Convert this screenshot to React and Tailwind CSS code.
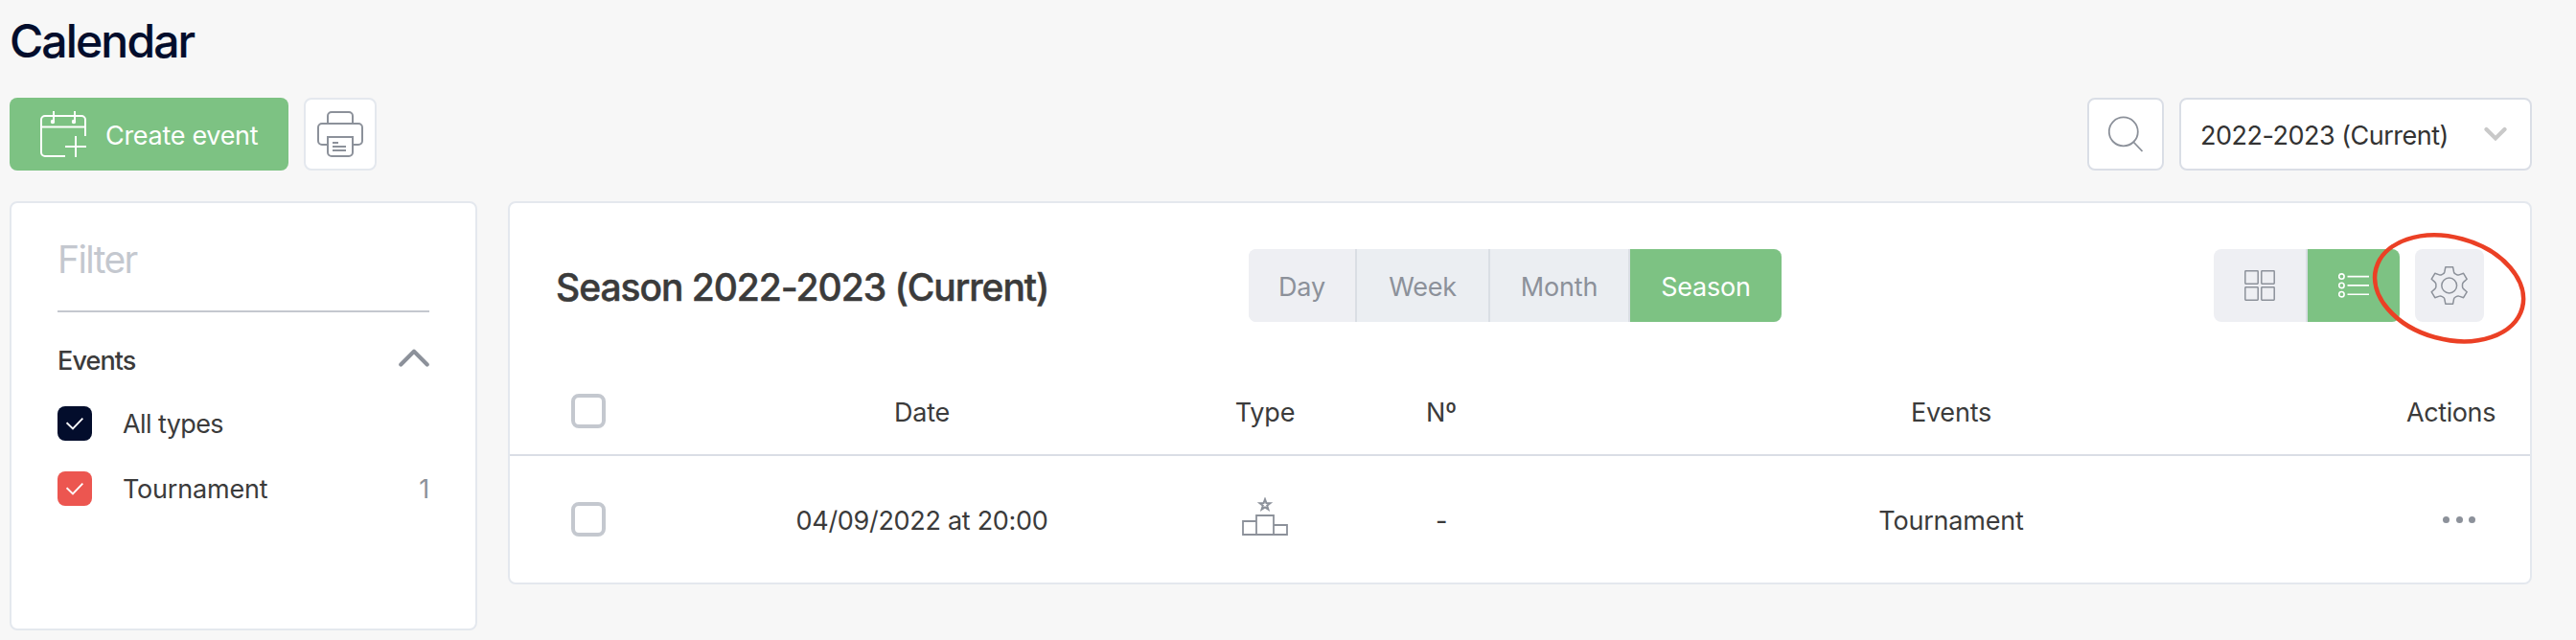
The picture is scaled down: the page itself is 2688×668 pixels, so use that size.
import React from "react";

function CalendarPlusIcon() {
  return (
    <svg width="48" height="48" viewBox="0 0 48 48" fill="none" stroke="white" strokeWidth="2">
      <path d="M47 26V9a4 4 0 0 0-4-4H5a4 4 0 0 0-4 4v34a4 4 0 0 0 4 4h21" />
      <path d="M1 16.5h46M14 0v11M36 0v11" />
      <path d="M37 26v22M26 37h22" />
      <circle cx="13" cy="11" r="1.2" fill="white" />
      <circle cx="35" cy="11" r="1.2" fill="white" />
    </svg>
  );
}

function PrinterIcon() {
  return (
    <svg width="48" height="48" viewBox="0 0 48 48" fill="none" stroke="#8c919a" strokeWidth="2">
      <path d="M11 13V5a4 4 0 0 1 4-4h18a4 4 0 0 1 4 4v8" />
      <path d="M11 35H5a4 4 0 0 1-4-4V17a4 4 0 0 1 4-4h38a4 4 0 0 1 4 4v14a4 4 0 0 1-4 4h-6" />
      <path d="M11 27h26v16a4 4 0 0 1-4 4H15a4 4 0 0 1-4-4z" />
      <path d="M16 33h6M16 37h14M16 41h14" />
    </svg>
  );
}

function SearchIcon() {
  return (
    <svg width="36" height="38" viewBox="0 0 36 38" fill="none" stroke="#8c919a" strokeWidth="1.8">
      <circle cx="15.8" cy="16.4" r="15" />
      <path d="M26.5 27.5 35.5 37" />
    </svg>
  );
}

function GridIcon() {
  return (
    <svg width="32" height="32" viewBox="0 0 32 32" fill="none" stroke="#8c919a" strokeWidth="1.5">
      <rect x="0.8" y="0.8" width="13.4" height="13.4" rx="0.6" />
      <rect x="17.8" y="0.8" width="13.4" height="13.4" rx="0.6" />
      <rect x="0.8" y="17.8" width="13.4" height="13.4" rx="0.6" />
      <rect x="17.8" y="17.8" width="13.4" height="13.4" rx="0.6" />
    </svg>
  );
}

function ListIcon() {
  return (
    <svg width="32" height="26" viewBox="0 0 32 26" fill="none" stroke="white" strokeWidth="1.6">
      <circle cx="3.4" cy="3.6" r="2.7" />
      <circle cx="3.4" cy="12.9" r="2.7" />
      <circle cx="3.4" cy="22.2" r="2.7" />
      <path d="M9.5 3.6H32M9.5 12.9H32M9.5 22.2H32" />
    </svg>
  );
}

function GearIcon() {
  return (
    <svg width="40" height="40" viewBox="0 0 40 40" fill="none" stroke="#8c919a" strokeWidth="1.5" strokeLinejoin="round">
      <circle cx="19.7" cy="20" r="7.9" />
      <path d="M15.8 .8h7.8l1 5.2q.3 1.3 1.5 1.9l1.3.7q1.3.8 2.6.3l4.6-1.6 3.6 6-3.5 3.1q-1.2 1.1-1.2 2.4v2.4q0 1.3 1.2 2.4l3.5 3.1-3.6 6-4.6-1.6q-1.3-.5-2.6.3l-1.3.7q-1.2.6-1.5 1.9l-1 5.2h-7.8l-1-5.2q-.3-1.3-1.5-1.9l-1.3-.7q-1.3-.8-2.6-.3l-4.6 1.6-3.6-6 3.5-3.1q1.2-1.1 1.2-2.4v-2.4q0-1.3-1.2-2.4l-3.5-3.1 3.6-6 4.6 1.6q1.3.5 2.6-.3l1.3-.7q1.2-.6 1.5-1.9z" />
    </svg>
  );
}

function PodiumIcon() {
  return (
    <svg width="48" height="40" viewBox="0 0 48 40" fill="none" stroke="#8c919a" strokeWidth="1.8">
      <path d="M15 39H1V25h14M33 29h14v10H33M15 39V19h18v20z" />
      <path d="M24 2.2l1.4 3.9 4 .1-3.2 2.5 1.2 4L24 10.4l-3.4 2.3 1.2-4-3.2-2.5 4-.1z" strokeWidth="2" />
    </svg>
  );
}

function Check({ className }) {
  return (
    <span className={`flex h-9 w-9 items-center justify-center rounded-lg ${className}`}>
      <svg width="18" height="14" viewBox="0 0 18 14" fill="none" stroke="white" strokeWidth="1.9">
        <path d="M.6 6.2 7 12.4 17.4 1.6" />
      </svg>
    </span>
  );
}

function EmptyCheck() {
  return <span className="block h-9 w-9 rounded-lg border-4 border-[#c4c8cf] bg-white" />;
}

const COLS = "grid grid-cols-[128px_604px_112px_256px_808px_200px] items-center text-center";

export default function App() {
  return (
    <div className="relative h-[668px] w-[2688px] overflow-hidden bg-[#f7f7f7] pl-[10px] font-['Inter',sans-serif] text-[27px] leading-8 tracking-[-0.2px] whitespace-nowrap text-[#3b3b3b]">
      <h1 className="pt-[13px] text-[48px] leading-[60px] font-medium tracking-[-1.85px] text-[#030d2c] [-webkit-text-stroke:0.2px]">Calendar</h1>

      <div className="mt-[29px] flex h-[76px] w-[2632px] items-center">
        <button className="flex h-[76px] w-[291px] items-center rounded-lg bg-[#7dc283] pl-8 text-white">
          <CalendarPlusIcon />
          <span className="ml-5 pt-[3px] tracking-[-0.3px]">Create event</span>
        </button>
        <button className="ml-4 flex h-[76px] w-[76px] items-center justify-center rounded-lg border-2 border-[#e4e8ee] bg-white">
          <PrinterIcon />
        </button>
        <button className="ml-auto flex h-[76px] w-20 items-center justify-center rounded-lg border-2 border-[#dadee6] bg-white">
          <SearchIcon />
        </button>
        <button className="ml-4 flex h-[76px] w-[368px] items-center justify-between rounded-lg border-2 border-[#dadee6] bg-white pr-6 pl-5 text-[#333333]">
          <span className="pt-[3px] tracking-[-0.5px]">2022-2023 (Current)</span>
          <svg width="24" height="16" viewBox="0 0 24 16" fill="none" stroke="#c9c9c9" strokeWidth="4.2" strokeLinecap="round">
            <path d="M2.5 3 12 12.4 21.5 3" />
          </svg>
        </button>
      </div>

      <div className="mt-8 flex items-start gap-8">
        <aside className="h-[448px] w-[488px] rounded-lg border-2 border-[#e4e8ee] bg-white px-12">
          <div className="h-[114px] border-b-2 border-[#c4c8cf] pt-[34px] text-[39px] leading-[50px] tracking-[-1.6px] text-[#c4c8cf]">Filter</div>
          <div className="flex h-20 items-center justify-between pt-[21px]">
            <span className="font-medium tracking-[-0.9px]">Events</span>
            <svg className="-mt-[7px]" width="32" height="19" viewBox="0 0 32 19" fill="none" stroke="#8c919a" strokeWidth="4.2" strokeLinecap="round" strokeLinejoin="round">
              <path d="M2.3 16.5 16 2.8 29.7 16.5" />
            </svg>
          </div>
          <div className="mt-[18px] flex h-9 items-center">
            <Check className="bg-[#030d2c]" />
            <span className="ml-8 pt-[2px] tracking-[-0.6px]">All types</span>
          </div>
          <div className="mt-8 flex h-9 items-center">
            <Check className="bg-[#ec5650]" />
            <span className="ml-8 pt-[2px]">Tournament</span>
            <span className="ml-auto pt-[2px] text-[#8c919a]">1</span>
          </div>
        </aside>

        <main className="h-[400px] w-[2112px] rounded-lg border-2 border-[#e4e8ee] bg-white">
          <div className="flex h-[172px] items-center pl-12">
            <h2 className="w-[723px] pt-[3px] text-[39px] font-medium tracking-[-1.05px] [-webkit-text-stroke:0.5px]">Season 2022-2023 (Current)</h2>
            <div className="flex h-[76px] overflow-hidden rounded-lg bg-[#ebeef2] text-[#8c919a]">
              <span className="flex w-[113px] items-center justify-center border-r-2 border-[#dadee4] bg-[#eeeff3] pt-[4px]">Day</span>
              <span className="flex w-[139px] items-center justify-center border-r-2 border-[#dadee4] pt-[4px]">Week</span>
              <span className="flex w-[146px] items-center justify-center border-r-2 border-[#dadee4] pt-[4px]">Month</span>
              <span className="flex w-[158px] items-center justify-center bg-[#7dc283] pt-[4px] text-white">Season</span>
            </div>
            <div className="ml-auto flex h-[76px] overflow-hidden rounded-lg">
              <span className="flex w-[98px] items-center justify-center border-r-2 border-[#dadee4] bg-[#eeeff3]"><GridIcon /></span>
              <span className="flex w-24 items-center justify-center bg-[#7dc283] pb-px"><ListIcon /></span>
            </div>
            <span className="mr-12 ml-4 flex h-[76px] w-[72px] items-center justify-center rounded-lg bg-[#eeeff3]"><GearIcon /></span>
          </div>
          <div className={`${COLS} h-[92px] border-b-2 border-[#dadee6]`}>
            <div className="pl-16"><EmptyCheck /></div>
            <div className="pt-[3px]">Date</div>
            <div className="pt-[3px]">Type</div>
            <div className="pt-[3px]">Nº</div>
            <div className="pt-[3px]">Events</div>
            <div className="pt-[3px] pr-9 text-right tracking-[-0.4px]">Actions</div>
          </div>
          <div className={`${COLS} h-[132px]`}>
            <div className="pl-16"><EmptyCheck /></div>
            <div className="pt-[3px] tracking-[-0.3px]">04/09/2022 at 20:00</div>
            <div className="flex justify-center pb-[7px]"><PodiumIcon /></div>
            <div className="pt-[3px]">-</div>
            <div className="pt-[3px]">Tournament</div>
            <div className="flex justify-end gap-[6.5px] pr-[57px]">
              <span className="h-[7px] w-[7px] rounded-full bg-[#8c919a]" />
              <span className="h-[7px] w-[7px] rounded-full bg-[#8c919a]" />
              <span className="h-[7px] w-[7px] rounded-full bg-[#8c919a]" />
            </div>
          </div>
        </main>
      </div>

      <svg className="absolute top-[236px] left-[2468px]" width="176" height="130" viewBox="0 0 176 130" fill="none" stroke="#eb4025" strokeWidth="4.6">
        <ellipse cx="87.6" cy="64.9" rx="79" ry="53.3" transform="rotate(15.2 87.6 64.9)" />
      </svg>
    </div>
  );
}
